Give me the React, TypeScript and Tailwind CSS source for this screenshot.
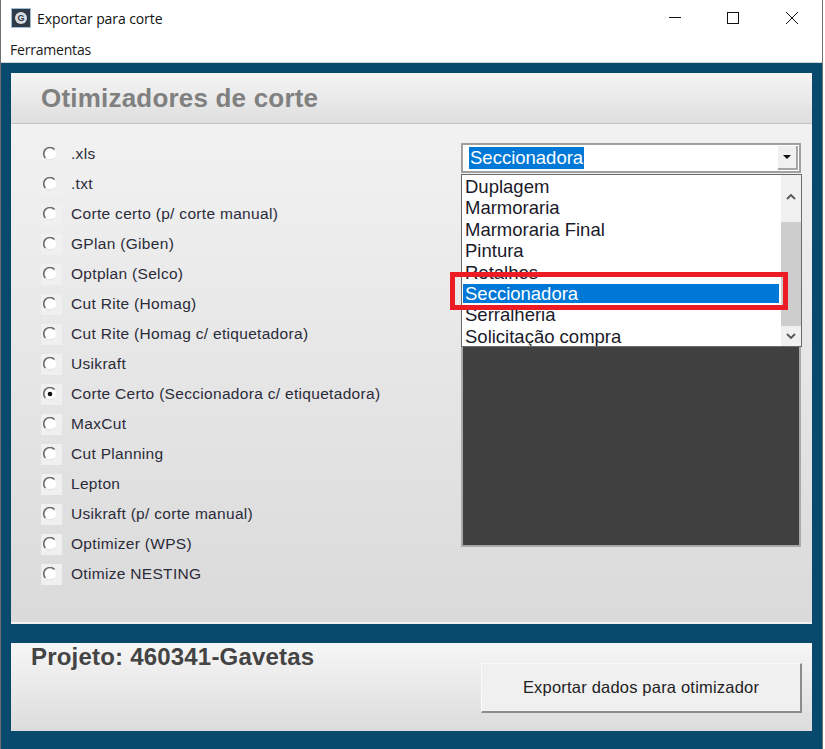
import React from "react";

const options = [
  ".xls",
  ".txt",
  "Corte certo (p/ corte manual)",
  "GPlan (Giben)",
  "Optplan (Selco)",
  "Cut Rite (Homag)",
  "Cut Rite (Homag c/ etiquetadora)",
  "Usikraft",
  "Corte Certo (Seccionadora c/ etiquetadora)",
  "MaxCut",
  "Cut Planning",
  "Lepton",
  "Usikraft (p/ corte manual)",
  "Optimizer (WPS)",
  "Otimize NESTING",
];

const listItems = ["Duplagem", "Marmoraria", "Marmoraria Final", "Pintura", "Retalhos", "Seccionadora", "Serralheria", "Solicitação compra"];

function Radio({ checked }: { checked: boolean }) {
  return (
    <div className="w-[21px] h-[21px] shrink-0 bg-[#f0f0f0] flex items-center pl-[2px] pb-[1px]">
      <svg width="14" height="14" viewBox="0 0 14 14">
        <circle cx="7" cy="7" r="6" fill="#ffffff" />
        <path d="M11.2 11.2A6 6 0 0 1 2.8 11.2" fill="none" stroke="#dedede" strokeWidth="1" />
        <path d="M2.4 11A6 6 0 0 1 11.5 2.5" fill="none" stroke="#6a6a6a" strokeWidth="1.6" />
        {checked && <circle cx="7" cy="7" r="2.3" fill="#111111" />}
      </svg>
    </div>
  );
}

export default function App() {
  return (
    <div className="w-[825px] h-[749px] bg-white overflow-hidden relative font-['Liberation_Sans',Arial,sans-serif]">
      <div className="w-[823px] h-[749px] flex flex-col border-l border-r border-[#6f6f6f] bg-white">
        {/* Title bar */}
        <div className="h-[37px] flex items-center shrink-0 pl-[10px] pb-[1px]">
          <div className="w-5 h-5 bg-[#2f3b47] border border-[#9fc0d8] flex items-center justify-center">
            <span className="w-[12px] h-[12px] rounded-full bg-[#d7dde2] text-[#2f3b47] text-[9px] leading-[12px] text-center font-bold">G</span>
          </div>
          <span className="ml-[6px] text-[14px] text-[#111] font-['Open_Sans',sans-serif] tracking-[-0.09px]">Exportar para corte</span>
          <div className="ml-auto flex items-center">
            <svg width="12" height="12" viewBox="0 0 12 12" className="mr-[46px]"><path d="M0 5.5H12" stroke="#111" strokeWidth="1" /></svg>
            <svg width="12" height="12" viewBox="0 0 12 12" className="mr-[47px]"><rect x="0.5" y="0.5" width="11" height="11" fill="none" stroke="#111" strokeWidth="1" /></svg>
            <svg width="12" height="12" viewBox="0 0 12 12" className="mr-[24px]"><path d="M0 0L12 12M12 0L0 12" stroke="#111" strokeWidth="1" /></svg>
          </div>
        </div>
        {/* Menu */}
        <div className="h-[26px] shrink-0 pl-[9px] flex items-center border-b border-[#d5d5d5]">
          <span className="text-[14px] text-[#1a1a1a] font-['Open_Sans',sans-serif] tracking-[-0.2px]">Ferramentas</span>
        </div>
        {/* Blue body */}
        <div className="flex-1 bg-[#08496e] px-[10px] pt-[10px] pb-[18px] flex flex-col gap-[19px] relative">
          {/* Main panel */}
          <div className="h-[551px] flex flex-col bg-[linear-gradient(#f4f4f4,#dadada)] border-b-2 border-[#f2f2f2]">
            <div className="h-[51px] shrink-0 bg-[linear-gradient(#f5f5f5,#dedede)] border-b border-[#c4c4c4] pl-[30px] pt-[10px]">
              <span className="block text-[26px] leading-[30px] font-bold text-[#808080] tracking-[0.2px]">Otimizadores de corte</span>
            </div>
            <div className="flex-1 flex pt-[15px] pl-[30px] pr-[11px]">
              <div className="flex-1 flex flex-col">
                {options.map((o, i) => (
                  <div key={o} className="h-[30px] flex items-center gap-[9px]">
                    <Radio checked={i === 8} />
                    <span className="text-[15.5px] text-[#2b2b3a] tracking-[0.31px] leading-[30px] whitespace-nowrap">{o}</span>
                  </div>
                ))}
              </div>
              <div className="w-[340px] shrink-0 mt-[4px] flex flex-col gap-[2px]">
                <div className="h-[30px] bg-white border-2 border-[#a0a0a0] flex items-center pl-[6px] pr-[1px]">
                  <span className="bg-[#0078d7] text-white text-[18.5px] leading-[22px] pl-[1px] pr-[1px]">Seccionadora</span>
                  <div className="ml-auto w-[20px] h-[24px] bg-[#f0f0f0] border-r-2 border-b-2 border-[#a5a5a5] flex items-center justify-center">
                    <svg width="10" height="6" viewBox="0 0 10 6"><path d="M1 1H9L5 5Z" fill="#111" /></svg>
                  </div>
                </div>
                <div className="h-[372px] bg-[#404040] border-2 border-[#a9a9a9] border-t-0" />
              </div>
            </div>
          </div>
          {/* Bottom panel */}
          <div className="h-[88px] bg-[linear-gradient(#f6f6f6,#dcdcdc)] flex justify-between pl-[20px] pr-[10px]">
            <span className="text-[24px] leading-[28px] font-bold text-[#444444] tracking-[0.2px]">Projeto: 460341-Gavetas</span>
            <button className="mt-[20px] w-[321px] h-[50px] bg-[#f0f0f0] border border-[#fafafa] border-r-2 border-b-2 border-r-[#8c8c8c] border-b-[#8c8c8c] text-[16.5px] text-[#222] tracking-[0.2px] font-['Liberation_Sans',sans-serif]">
              Exportar dados para otimizador
            </button>
          </div>
        </div>
      </div>

      {/* Open dropdown list */}
      <div className="absolute left-[461px] top-[174px] w-[341px] h-[173px] bg-white border border-[#6a6a6a] overflow-hidden">
        <div className="flex flex-col pt-[1px]">
          {listItems.map((it) => (
            <div
              key={it}
              className={
                it === "Seccionadora"
                  ? "h-[21.4px] leading-[19px] text-[18.5px] px-[2px] bg-[#0078d7] text-white mr-[21px] border border-white"
                  : "h-[21.4px] leading-[21px] text-[18.5px] px-[3px] text-[#1a1a2a]"
              }
            >
              {it}
            </div>
          ))}
        </div>
        <div className="absolute right-0 top-0 bottom-0 w-[20px] bg-[#f0f0f0] flex flex-col items-center justify-between">
          <div className="h-[47px] w-full flex items-center justify-center pb-[4px]">
            <svg width="10" height="7" viewBox="0 0 10 7"><path d="M1 6L5 2L9 6" fill="none" stroke="#555" strokeWidth="1.8" /></svg>
          </div>
          <div className="flex-1 w-full bg-[#cdcdcd]" />
          <div className="h-[20px] w-full flex items-center justify-center">
            <svg width="10" height="7" viewBox="0 0 10 7"><path d="M1 1L5 5L9 1" fill="none" stroke="#555" strokeWidth="1.8" /></svg>
          </div>
        </div>
      </div>

      {/* Red annotation */}
      <div className="absolute left-[450px] top-[272px] w-[338px] h-[38px] border-[5px] border-[#ed1c24]" />
    </div>
  );
}
